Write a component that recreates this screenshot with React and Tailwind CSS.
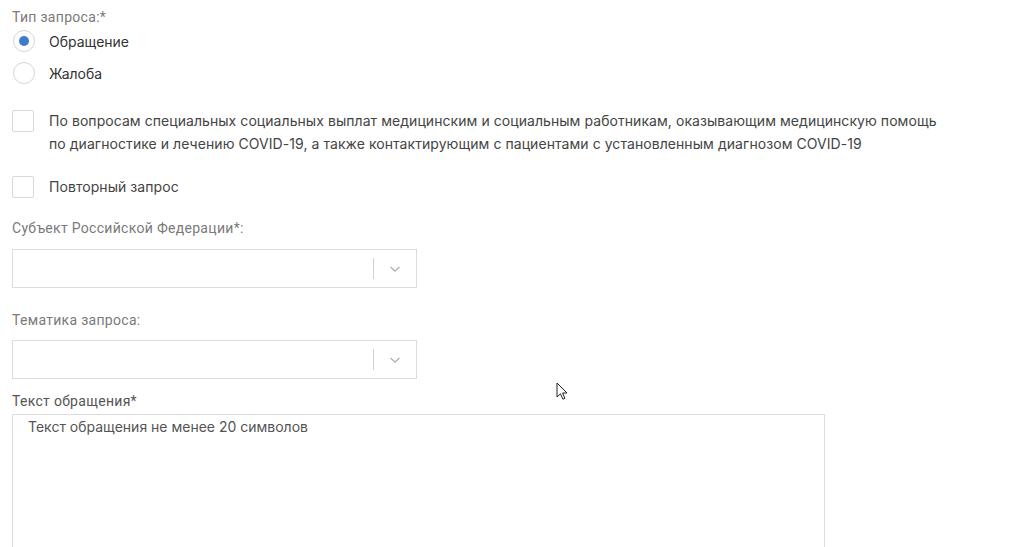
import { useState } from "react";

function Radio({ checked, label, onChange }) {
  return (
    <label className="flex items-center h-[32px] cursor-pointer" onClick={onChange}>
      <span className="w-[22px] h-[22px] ml-[13px] rounded-full border border-[#d6d6d6] bg-white flex items-center justify-center">
        {checked && <span className="w-[10px] h-[10px] rounded-full bg-[#3b7ccc]" />}
      </span>
      <span className="ml-[14px] text-[14px] text-[#333]">{label}</span>
    </label>
  );
}

function Checkbox({ children }) {
  return (
    <div className="flex items-start">
      <span className="w-[22px] h-[22px] shrink-0 border border-[#d9d9d9] bg-white rounded-[2px]" />
      <div className="ml-[15px] text-[14px] leading-[23px] text-[#444] -mt-[1px] tracking-[0.06px]">{children}</div>
    </div>
  );
}

function Select() {
  return (
    <div className="w-[405px] h-[39px] border border-[#dcdcdc] bg-white flex items-center">
      <div className="flex-1" />
      <span className="w-px h-[21px] bg-[#d0d0d0]" />
      <div className="w-[42px] flex justify-center">
        <svg width="14" height="14" viewBox="0 0 14 14">
          <path d="M2.5 5 7 9l4.5-4" fill="none" stroke="#b3b3b3" strokeWidth="1.4" />
        </svg>
      </div>
    </div>
  );
}

const labelFont = { fontFamily: "Roboto, sans-serif", letterSpacing: "0.3px" };

export default function App() {
  const [kind, setKind] = useState("appeal");

  return (
    <div className="relative w-[1024px] h-[547px] overflow-hidden bg-white" style={{ fontFamily: "Inter, 'Noto Sans', sans-serif" }}>
      <div className="pl-[12px] pt-[8px]">
        <div className="text-[14px] text-[#7a7a7a] leading-[18px]" style={labelFont}>
          Тип запроса:*
        </div>
        <div className="-ml-[12px] -mt-[1px]">
          <Radio checked={kind === "appeal"} label="Обращение" onChange={() => setKind("appeal")} />
          <Radio checked={kind === "complaint"} label="Жалоба" onChange={() => setKind("complaint")} />
        </div>

        <div className="mt-[21px]">
          <Checkbox>
            По вопросам специальных социальных выплат медицинским и социальным работникам, оказывающим медицинскую помощь
            <br />
            по диагностике и лечению COVID-19, а также контактирующим с пациентами с установленным диагнозом COVID-19
          </Checkbox>
        </div>
        <div className="mt-[21px]">
          <Checkbox>Повторный запрос</Checkbox>
        </div>

        <div className="mt-[21px] text-[14px] text-[#7a7a7a] leading-[18px]" style={labelFont}>
          Субъект Российской Федерации*:
        </div>
        <div className="mt-[12px]">
          <Select />
        </div>

        <div className="mt-[23px] text-[14px] text-[#7a7a7a] leading-[18px]" style={labelFont}>
          Тематика запроса:
        </div>
        <div className="mt-[11px]">
          <Select />
        </div>

        <div className="mt-[13px] text-[14px] text-[#555] leading-[18px]" style={labelFont}>
          Текст обращения*
        </div>
        <textarea
          className="mt-[4px] w-[813px] h-[160px] border border-[#dcdcdc] resize-none px-[15px] py-[1px] text-[14px] text-[#333] placeholder:text-[#555] outline-none"
          placeholder="Текст обращения не менее 20 символов"
        />
      </div>

      {/* mouse pointer */}
      <svg className="absolute left-[556px] top-[382px]" width="14" height="20" viewBox="0 0 14 20">
        <path d="M1 1v14l3.5-3.2 2.4 5.4 2-0.9-2.3-5.3H11z" fill="#fff" stroke="#222" strokeWidth="1" strokeLinejoin="round" />
      </svg>
    </div>
  );
}
